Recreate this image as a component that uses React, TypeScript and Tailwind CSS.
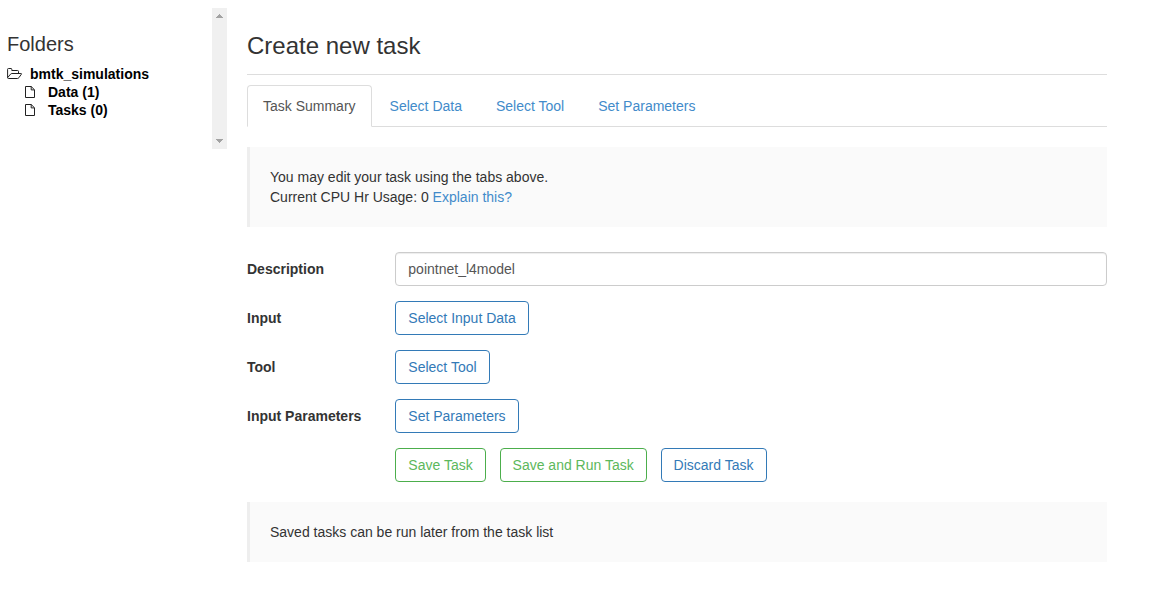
import { useState, type ReactNode } from 'react';

function FolderOpenIcon() {
  return (
    <svg viewBox="0 0 16 12" className="h-3 w-4 shrink-0 text-[#222]" fill="none" stroke="currentColor" strokeLinejoin="round" strokeWidth="1">
      <path d="M.6 9.7V1.3Q.6.5 1.4.5H4Q4.8.5 4.8 1.3V2.5H10.6Q11.5 2.5 11.5 3.4V5.5" />
      <path d="M.6 9.7L3.6 6.1Q4.1 5.5 5 5.5H13.9Q14.9 5.5 14.3 6.3L11.9 9.7Q11.3 10.5 10.4 10.5H1.4Q.6 10.5.6 9.7Z" />
    </svg>
  );
}

function FileIcon() {
  return (
    <svg viewBox="0 0 10 12" className="h-3 w-2.5 shrink-0 text-[#222]" fill="none" stroke="currentColor" strokeLinejoin="round" strokeWidth="1">
      <path d="M.5.5H6.2L9.5 3.8V11.5H.5Z" />
      <path d="M6.2.5V3.9H9.5" />
    </svg>
  );
}

function ScrollRail() {
  return (
    <div className="flex h-[141px] w-[15px] shrink-0 flex-col items-center justify-between bg-[#f0f0f0] pt-1.5 pb-1.5">
      <svg viewBox="0 0 7 4" className="h-1 w-[7px]" fill="#a3a3a3" shapeRendering="crispEdges">
        <path d="M3 0h1v1h1v1h1v1h1v1H0V3h1V2h1V1h1z" />
      </svg>
      <svg viewBox="0 0 7 4" className="h-1 w-[7px]" fill="#a3a3a3" shapeRendering="crispEdges">
        <path d="M0 0h7v1H6v1H5v1H4v1H3V3H2V2H1V1H0z" />
      </svg>
    </div>
  );
}

function OutlineButton({ children, tone = 'primary' }: { children: ReactNode; tone?: 'primary' | 'success' }) {
  const color = tone === 'primary' ? 'border-[#337ab7] text-[#337ab7]' : 'border-[#4cae4c] text-[#5cb85c]';
  return (
    <button type="button" className={`h-[34px] rounded border bg-white px-3 leading-5 whitespace-nowrap ${color}`}>
      {children}
    </button>
  );
}

function FormRow({ label, children }: { label?: string; children: ReactNode }) {
  return (
    <div className="flex h-[34px] items-center">
      <div className="w-[148.33px] shrink-0 font-bold">{label}</div>
      {children}
    </div>
  );
}

function Callout({ children }: { children: ReactNode }) {
  return <div className="border-l-3 border-[#eee] bg-[#fafafa] p-5">{children}</div>;
}

const tabs = ['Task Summary', 'Select Data', 'Select Tool', 'Set Parameters'];

export default function App() {
  const [active, setActive] = useState(0);
  const [description, setDescription] = useState('pointnet_l4model');

  return (
    <div className="flex h-[589px] w-[1160px] overflow-hidden bg-white font-['Liberation_Sans',Arial,sans-serif] text-sm leading-5 text-[#333]">
      <aside className="flex w-[227px] shrink-0 pt-2">
        <div className="flex-1 pt-[25px] pl-[7px]">
          <h2 className="text-[20px] leading-[22px]">Folders</h2>
          <ul className="mt-2.5 leading-[18px] font-bold text-black">
            <li className="flex h-[18px] items-center gap-[7px]">
              <FolderOpenIcon />
              bmtk_simulations
            </li>
            <li className="flex h-[18px] items-center gap-[13px] pl-[18px]">
              <FileIcon />
              Data (1)
            </li>
            <li className="flex h-[18px] items-center gap-[13px] pl-[18px]">
              <FileIcon />
              Tasks (0)
            </li>
          </ul>
        </div>
        <ScrollRail />
      </aside>

      <main className="ml-5 w-[860px] shrink-0 pt-[33px]">
        <h1 className="border-b border-[#ddd] pb-[15px] text-2xl leading-[26px]">Create new task</h1>

        <nav className="mt-2.5 flex h-[42px] border-b border-[#ddd]">
          {tabs.map((tab, i) => (
            <button
              key={tab}
              type="button"
              onClick={() => setActive(i)}
              className={
                i === active
                  ? 'mr-0.5 h-[42px] rounded-t border border-b-white border-[#ddd] bg-white px-[15px] text-[#555]'
                  : 'mr-0.5 h-[42px] border border-transparent px-[15px] text-[#428bca]'
              }
            >
              {tab}
            </button>
          ))}
        </nav>

        <div className="mt-5">
          <Callout>
            You may edit your task using the tabs above.
            <br />
            Current CPU Hr Usage: 0 <a className="text-[#428bca]">Explain this?</a>
          </Callout>
        </div>

        <div className="mt-[25px] mb-5 flex flex-col gap-[15px]">
          <FormRow label="Description">
            <input
              value={description}
              onChange={(e) => setDescription(e.target.value)}
              className="h-[34px] min-w-0 flex-1 rounded border border-[#ccc] px-3 text-[#555] shadow-[inset_0_1px_1px_rgba(0,0,0,0.075)] outline-none"
            />
          </FormRow>
          <FormRow label="Input">
            <OutlineButton>Select Input Data</OutlineButton>
          </FormRow>
          <FormRow label="Tool">
            <OutlineButton>Select Tool</OutlineButton>
          </FormRow>
          <FormRow label="Input Parameters">
            <OutlineButton>Set Parameters</OutlineButton>
          </FormRow>
          <FormRow>
            <div className="flex gap-[13.9px]">
              <OutlineButton tone="success">Save Task</OutlineButton>
              <OutlineButton tone="success">Save and Run Task</OutlineButton>
              <OutlineButton>Discard Task</OutlineButton>
            </div>
          </FormRow>
        </div>

        <Callout>Saved tasks can be run later from the task list</Callout>
      </main>
    </div>
  );
}
